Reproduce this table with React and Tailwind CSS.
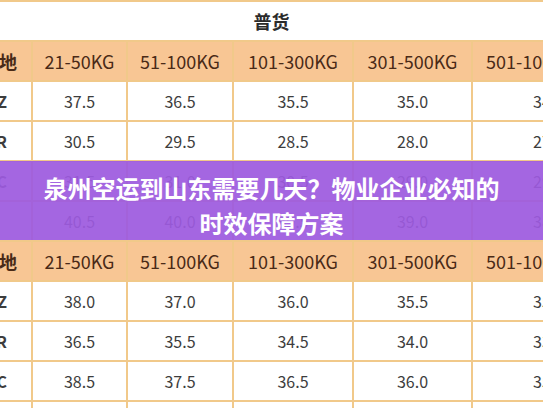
const COLS = "grid grid-cols-[31px_93px_104px_118px_117px_1fr] gap-x-[2px]";

const headers = ["始发地", "21-50KG", "51-100KG", "101-300KG", "301-500KG", "501-1000KG"];

const topRows = [
  ["SZ", "37.5", "36.5", "35.5", "35.0", "34.5"],
  ["HR", "30.5", "29.5", "28.5", "28.0", "27.5"],
  ["HC", "31.5", "31.0", "30.5", "29.0", "29.5"],
  ["", "40.5", "40.0", "39.5", "39.0", "38.5"],
];

const bottomRows = [
  ["SZ", "38.0", "37.0", "36.0", "35.5", "35.0"],
  ["HR", "36.5", "35.5", "34.5", "34.0", "33.5"],
  ["HC", "38.5", "37.5", "36.5", "36.0", "35.5"],
];

const Cell = ({ children, first, last, header }) => {
  let align = "justify-center";
  if (first) align = header ? "justify-end pr-[14px]" : "justify-end pr-[24px]";
  if (last) align = header ? "justify-start pl-[13px]" : "justify-start pl-[60px]";
  return (
    <div
      className={`flex items-center overflow-hidden whitespace-nowrap h-[38px] ${align} ${
        header ? "bg-[#f8c694] text-[18px] text-[#4a2a17]" : "bg-white text-[16px] text-[#3d3d3d]"
      } ${first ? "font-bold" : ""}`}
    >
      {children}
    </div>
  );
};

const Row = ({ cells, header }) => (
  <div className={COLS}>
    {cells.map((c, i) => (
      <Cell key={i} first={i === 0} last={i === cells.length - 1} header={header}>
        {c}
      </Cell>
    ))}
  </div>
);

export default function App() {
  return (
    <div
      className="relative w-[543px] h-[408px] overflow-hidden bg-white"
      style={{ fontFamily: '"Noto Sans CJK SC", "Noto Sans", sans-serif' }}
    >
      <div className="flex flex-col gap-y-[2px] bg-[#f1c98a] pt-[2px]">
        <div className="flex items-center justify-center h-[38px] bg-white text-[18px] font-bold text-[#2b2b2b]">
          普货
        </div>
        <Row cells={headers} header />
        {topRows.map((r, i) => (
          <Row key={i} cells={r} />
        ))}
        <Row cells={headers} header />
        {bottomRows.map((r, i) => (
          <Row key={i} cells={r} />
        ))}
        <Row cells={["", "", "", "", "", ""]} />
      </div>

      <div className="absolute left-0 right-0 top-[161px] h-[79px] bg-[#9d5adf]/[0.93] flex flex-col items-center justify-center pt-[9px]">
        <p className="text-white font-bold text-[24px] leading-[35px] text-center">
          泉州空运到山东需要几天？物业企业必知的
        </p>
        <p className="text-white font-bold text-[24px] leading-[35px] text-center">
          时效保障方案
        </p>
      </div>
    </div>
  );
}
